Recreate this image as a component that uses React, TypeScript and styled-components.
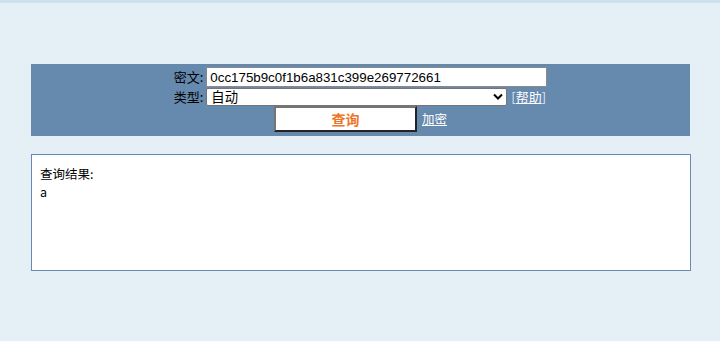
import React from "react";
import styled, { createGlobalStyle } from "styled-components";

const GlobalStyle = createGlobalStyle`
  html, body {
    margin: 0;
    padding: 0;
    background: #e4eff6;
    font-family: "Liberation Sans", "Noto Sans CJK SC", sans-serif;
    font-size: 12px;
    color: #000;
  }
`;

const TopStrip = styled.div`
  height: 3px;
  background: #cedfee;
`;

const Page = styled.div`
  padding: 61px 30px 0 31px;
`;

const Panel = styled.form`
  width: 659px;
  background: #6689ae;
  padding: 3px 0 4px;
  display: flex;
  flex-direction: column;
  align-items: center;
`;

const Fields = styled.div`
  display: grid;
  grid-template-columns: auto 341px;
  column-gap: 3px;
  row-gap: 1px;
  align-items: center;
`;

const Label = styled.label`
  font-family: "Noto Sans CJK SC", sans-serif;
  font-size: 13px;
  line-height: 18px;
  text-align: right;
  color: #000;
`;

const TextInput = styled.input`
  box-sizing: border-box;
  width: 341px;
  height: 20px;
  border: 1px solid #8a8a8a;
  border-radius: 1px;
  padding: 0 3px;
  font-family: "Liberation Sans", "Noto Sans CJK SC", sans-serif;
  font-size: 13.33px;
  color: #000;
  background: #fff;
  outline: none;
`;

const SelectRow = styled.div`
  display: flex;
  align-items: center;
  gap: 4px;
  height: 18px;
`;

const SelectWrap = styled.div`
  position: relative;
  width: 301px;
  height: 18px;
`;

const Select = styled.select`
  box-sizing: border-box;
  appearance: none;
  width: 100%;
  height: 18px;
  border: 1px solid #767676;
  border-radius: 2px;
  padding: 0 4px;
  background: #fff;
  font-family: "Noto Sans CJK SC", sans-serif;
  font-size: 13.33px;
  line-height: 16px;
  color: #000;
  outline: none;
`;

const Chevron = styled.svg`
  position: absolute;
  right: 4px;
  top: 5px;
  pointer-events: none;
`;

const HelpLink = styled.span`
  font-family: "Noto Sans CJK SC", sans-serif;
  font-size: 13px;
  line-height: 18px;
  color: #dbe8f5;
  white-space: nowrap;

  a {
    color: #fff;
    text-decoration: underline;
  }
`;

const Actions = styled.div`
  display: flex;
  align-items: center;
  gap: 5px;
  height: 26px;
`;

const SubmitBtn = styled.button`
  box-sizing: border-box;
  width: 143px;
  height: 26px;
  background: #fff;
  border-style: solid;
  border-width: 2px;
  border-color: #747474 #232323 #232323 #747474;
  font-family: "Noto Sans CJK SC", sans-serif;
  font-size: 14px;
  font-weight: bold;
  color: #f07426;
  padding: 0;
  cursor: pointer;
`;

const Link = styled.a`
  font-family: "Noto Sans CJK SC", sans-serif;
  font-size: 12.5px;
  line-height: 18px;
  color: #fff;
  text-decoration: underline;
`;

const ResultBox = styled.div`
  box-sizing: border-box;
  width: 660px;
  height: 117px;
  margin-top: 18px;
  background: #fff;
  border: 1px solid #6689b5;
  padding: 10px 8px;
  font-family: "Noto Sans CJK SC", sans-serif;
  font-size: 12.5px;
  line-height: 18px;
`;

export default function App() {
  return (
    <>
      <GlobalStyle />
      <TopStrip />
      <Page>
        <Panel onSubmit={(e) => e.preventDefault()}>
          <Fields>
            <Label>密文:</Label>
            <TextInput defaultValue="0cc175b9c0f1b6a831c399e269772661" />
            <Label>类型:</Label>
            <SelectRow>
              <SelectWrap>
                <Select defaultValue="auto">
                  <option value="auto">自动</option>
                  <option value="md5">md5</option>
                </Select>
                <Chevron width="10" height="8" viewBox="0 0 10 8">
                  <path d="M1 1.5 L5 5.5 L9 1.5" fill="none" stroke="#000" strokeWidth="2" />
                </Chevron>
              </SelectWrap>
              <HelpLink>
                [<a href="#">帮助</a>]
              </HelpLink>
            </SelectRow>
          </Fields>
          <Actions>
            <SubmitBtn type="submit">查询</SubmitBtn>
            <Link href="#">加密</Link>
          </Actions>
        </Panel>
        <ResultBox>
          查询结果:
          <br />a
        </ResultBox>
      </Page>
    </>
  );
}
